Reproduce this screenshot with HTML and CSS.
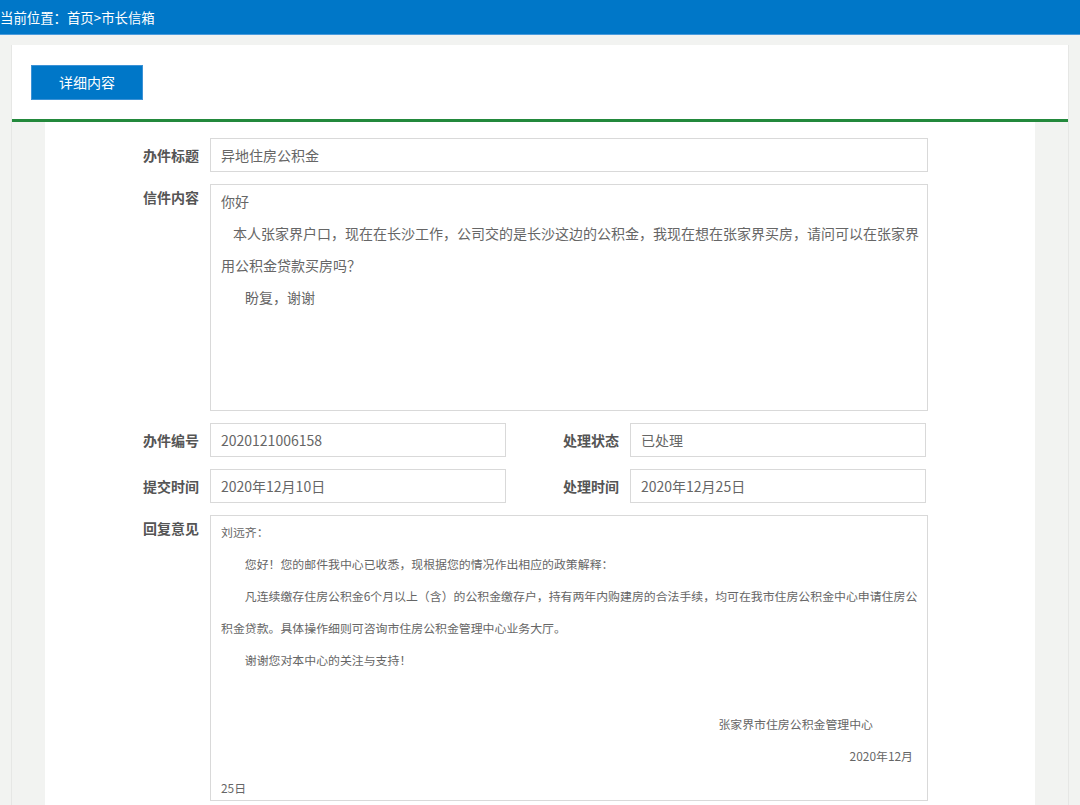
FILE: index.html
```html
<!DOCTYPE html>
<html lang="zh-CN">
<head>
<meta charset="utf-8">
<title>市长信箱 - 详细内容</title>
<link rel="stylesheet" href="styles.css">
</head>
<body>
<div class="topbar">当前位置：首页&gt;市长信箱</div>
<div class="panel">
  <div class="panel-head">
    <span class="tab-btn">详细内容</span>
  </div>
  <div class="panel-body">
    <div class="form">
      <div class="row">
        <div class="label">办件标题</div>
        <div class="field single">异地住房公积金</div>
      </div>
      <div class="row">
        <div class="label tall">信件内容</div>
        <div class="field letter">
          <p>你好</p>
          <p class="ind1">本人张家界户口，现在在长沙工作，公司交的是长沙这边的公积金，我现在想在张家界买房，请问可以在张家界用公积金贷款买房吗？</p>
          <p class="ind2">盼复，谢谢</p>
        </div>
      </div>
      <div class="row">
        <div class="label">办件编号</div>
        <div class="field single half">2020121006158</div>
        <div class="label side">处理状态</div>
        <div class="field single half">已处理</div>
      </div>
      <div class="row">
        <div class="label">提交时间</div>
        <div class="field single half">2020年12月10日</div>
        <div class="label side">处理时间</div>
        <div class="field single half">2020年12月25日</div>
      </div>
      <div class="row">
        <div class="label tall">回复意见</div>
        <div class="field reply">
          <p>刘远齐：</p>
          <p class="ind2">您好！您的邮件我中心已收悉，现根据您的情况作出相应的政策解释：</p>
          <p class="ind2">凡连续缴存住房公积金6个月以上（含）的公积金缴存户，持有两年内购建房的合法手续，均可在我市住房公积金中心申请住房公积金贷款。具体操作细则可咨询市住房公积金管理中心业务大厅。</p>
          <p class="ind2">谢谢您对本中心的关注与支持！</p>
          <p class="blank">&nbsp;</p>
          <p class="sign">张家界市住房公积金管理中心</p>
          <p class="sign-date">2020年12月</p>
          <p>25日</p>
        </div>
      </div>
    </div>
  </div>
</div>
</body>
</html>
```
FILE: styles.css
```css
* { box-sizing: border-box; }

html, body {
  margin: 0;
  padding: 0;
}

body {
  background: #f2f3f1;
  font-family: "Noto Sans CJK SC", "Microsoft YaHei", sans-serif;
  color: #666;
  font-size: 14px;
}

.topbar {
  height: 35px;
  line-height: 34px;
  background: #0077c8;
  border-bottom: 1px solid #4b9bdc;
  color: #fff;
  font-size: 13.4px;
  padding-left: 0;
  white-space: nowrap;
}

.panel {
  margin: 10px 11px 0 11px;
  border-left: 1px solid #e6e7e5;
  border-right: 1px solid #e6e7e5;
}

.panel-head {
  background: #fff;
  height: 77px;
  padding: 20px 19px 0;
  border-bottom: 3px solid #23893c;
}

.tab-btn {
  display: inline-block;
  width: 112px;
  height: 35px;
  line-height: 33px;
  text-align: center;
  background: #0077c8;
  border: 1px solid #3c92d6;
  color: #fff;
  font-size: 14px;
}

.panel-body {
  padding: 0 33px 0 33px;
}

.form {
  background: #fff;
  padding: 16px 0 6px;
}

.row {
  display: flex;
  align-items: flex-start;
}

.row + .row {
  margin-top: 12px;
}

.label {
  width: 154px;
  margin-right: 11px;
  text-align: right;
  font-weight: bold;
  color: #555;
  font-size: 14px;
  line-height: 34px;
  flex: none;
}

.label.tall {
  line-height: 26px;
}

.label.side {
  width: 113px;
}

.field {
  border: 1px solid #d9d9d9;
  background: #fff;
  width: 718px;
  padding: 0 10px;
  color: #666;
}

.field.single {
  height: 34px;
  line-height: 32px;
  font-size: 14px;
  white-space: nowrap;
}

.field.half {
  width: 296px;
}

.field p {
  margin: 0;
}

.letter {
  height: 227px;
  font-size: 14px;
  line-height: 32px;
  padding-right: 4px;
}

.letter .ind1 {
  text-indent: 12px;
}

.letter .ind2 {
  text-indent: 24px;
}

.reply {
  height: 286px;
  font-size: 11.9px;
  line-height: 32px;
  padding-right: 6px;
}

.reply .ind2 {
  text-indent: 2em;
}

.reply .sign {
  text-align: right;
  margin-right: 48px;
}

.reply .sign-date {
  text-align: right;
  margin-right: 8px;
}
```
